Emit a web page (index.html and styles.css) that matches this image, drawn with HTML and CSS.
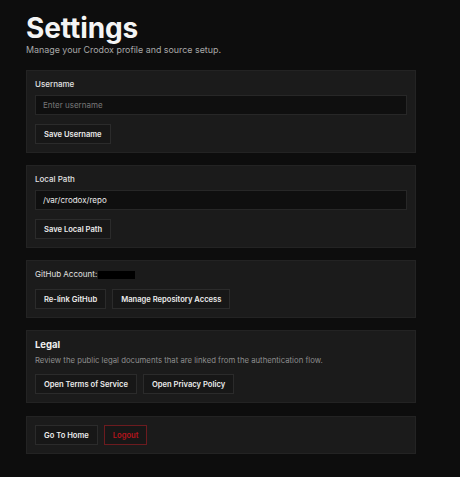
FILE: index.html
```html
<!DOCTYPE html>
<html lang="en">
<head>
<meta charset="utf-8">
<title>Settings</title>
<link rel="stylesheet" href="styles.css">
</head>
<body>
<main class="page">
  <h1 class="title">Settings</h1>
  <p class="subtitle">Manage your Crodox profile and source setup.</p>

  <section class="card">
    <label class="label" for="username">Username</label>
    <input class="input" id="username" type="text" placeholder="Enter username">
    <div class="actions"><button class="btn">Save Username</button></div>
  </section>

  <section class="card">
    <label class="label" for="path">Local Path</label>
    <input class="input" id="path" type="text" value="/var/crodox/repo">
    <div class="actions"><button class="btn">Save Local Path</button></div>
  </section>

  <section class="card">
    <div class="account">GitHub Account: <span class="redacted"></span></div>
    <div class="actions">
      <button class="btn">Re-link GitHub</button>
      <button class="btn">Manage Repository Access</button>
    </div>
  </section>

  <section class="card">
    <h2 class="card-title">Legal</h2>
    <p class="desc">Review the public legal documents that are linked from the authentication flow.</p>
    <div class="actions">
      <button class="btn">Open Terms of Service</button>
      <button class="btn">Open Privacy Policy</button>
    </div>
  </section>

  <section class="card card-last">
    <div class="actions actions-flush">
      <button class="btn">Go To Home</button>
      <button class="btn btn-danger">Logout</button>
    </div>
  </section>
</main>
</body>
</html>
```

FILE: styles.css
```css
* { box-sizing: border-box; }

html, body {
  margin: 0;
  background: #0d0d0d;
  color: #e8e8e8;
  font-family: Inter, "Noto Sans", sans-serif;
}

.page {
  width: 390px;
  margin-left: 26px;
  padding-top: 12px;
  display: flex;
  flex-direction: column;
}

.title {
  margin: 0;
  font-size: 28px;
  line-height: 32px;
  font-weight: 700;
  color: #f4f4f4;
  letter-spacing: -0.1px;
}

.subtitle {
  margin: 0 0 14px;
  font-size: 8.9px;
  line-height: 12px;
  color: #a8a8a8;
}

.card {
  background: #1b1b1b;
  border: 1px solid #232323;
  padding: 8px;
  margin-bottom: 12px;
  display: flex;
  flex-direction: column;
}

.card-last { margin-top: 1px; }

.label {
  font-size: 8px;
  line-height: 10px;
  font-weight: 500;
  color: #e2e2e2;
  margin-bottom: 6px;
}

.input {
  height: 20px;
  width: 100%;
  background: #0f0f0f;
  border: 1px solid #272727;
  color: #ececec;
  font-family: inherit;
  font-size: 8px;
  padding: 0 7px;
  outline: none;
}

.input::placeholder { color: #777; }

.actions {
  display: flex;
  gap: 6px;
  margin-top: 9px;
}

.actions-flush { margin-top: 0; }

.btn {
  height: 20px;
  padding: 0 8px;
  background: #171717;
  border: 1px solid #2b2b2b;
  color: #ececec;
  font-family: inherit;
  font-size: 7.6px;
  font-weight: 600;
}

.btn-danger {
  color: #b8141c;
  border-color: #6c1b1f;
}

.account {
  font-size: 8px;
  line-height: 11px;
  color: #e2e2e2;
  display: flex;
  align-items: center;
  gap: 1px;
}

.redacted {
  display: inline-block;
  width: 37px;
  height: 8px;
  background: #000;
}

.card-title {
  margin: 0;
  font-size: 9.5px;
  line-height: 12px;
  font-weight: 700;
  color: #f0f0f0;
}

.desc {
  margin: 4px 0 0;
  font-size: 7.75px;
  line-height: 10px;
  color: #8e8e8e;
}

.desc + .actions { margin-top: 9px; }
```
